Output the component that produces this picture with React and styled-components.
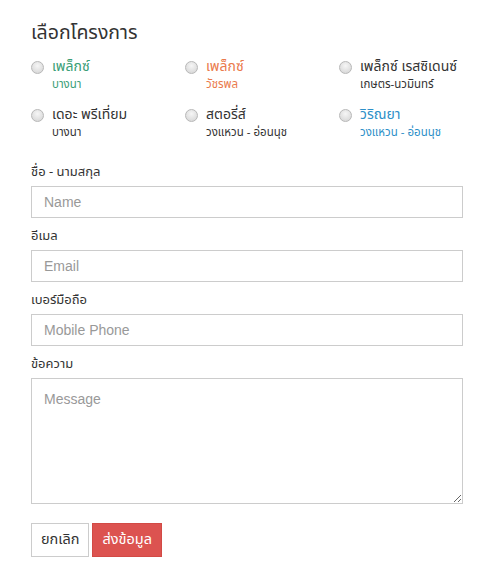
import styled, { createGlobalStyle } from "styled-components";

const projects = [
  { name: "เพล็กซ์", area: "บางนา", color: "#3a9e76" },
  { name: "เพล็กซ์", area: "วัชรพล", color: "#ea7a4c" },
  { name: "เพล็กซ์ เรสซิเดนซ์", area: "เกษตร-นวมินทร์", color: "#333" },
  { name: "เดอะ พรีเที่ยม", area: "บางนา", color: "#333" },
  { name: "สตอรี่ส์", area: "วงแหวน - อ่อนนุช", color: "#333" },
  { name: "วิริณยา", area: "วงแหวน - อ่อนนุช", color: "#2d8fc8" },
];

const fields = [
  { label: "ชื่อ - นามสกุล", placeholder: "Name", type: "text" },
  { label: "อีเมล", placeholder: "Email", type: "email" },
  { label: "เบอร์มือถือ", placeholder: "Mobile Phone", type: "tel" },
];

export default function App() {
  return (
    <>
      <GlobalStyle />
      <Form onSubmit={(e) => e.preventDefault()}>
        <Title>เลือกโครงการ</Title>
        <ProjectGrid>
          {projects.map((p, i) => (
            <ProjectOption key={i}>
              <Radio type="radio" name="project" />
              <ProjectText>
                <ProjectName $color={p.color}>{p.name}</ProjectName>
                <ProjectArea $color={p.color}>{p.area}</ProjectArea>
              </ProjectText>
            </ProjectOption>
          ))}
        </ProjectGrid>
        <Fields>
          {fields.map((f) => (
            <Field key={f.label}>
              <Label>{f.label}</Label>
              <Input type={f.type} placeholder={f.placeholder} />
            </Field>
          ))}
          <Field>
            <Label>ข้อความ</Label>
            <TextArea placeholder="Message" />
          </Field>
        </Fields>
        <Actions>
          <Button type="button">ยกเลิก</Button>
          <Button type="submit" $primary>
            ส่งข้อมูล
          </Button>
        </Actions>
      </Form>
    </>
  );
}

const GlobalStyle = createGlobalStyle`
  body {
    margin: 0;
    background: #fff;
    font-family: "Noto Sans Thai", "Noto Sans", "Liberation Sans", sans-serif;
    color: #333;
  }
`;

const Form = styled.form`
  width: 432px;
  padding: 19px 29px 0 31px;
  display: flex;
  flex-direction: column;
`;

const Title = styled.h2`
  margin: 0;
  font-size: 19.5px;
  font-weight: 400;
  line-height: 28px;
  color: #333;
`;

const ProjectGrid = styled.div`
  display: grid;
  grid-template-columns: repeat(3, 154px);
  row-gap: 12px;
  margin-top: 10px;
`;

const ProjectOption = styled.label`
  display: flex;
  align-items: flex-start;
  gap: 8px;
  cursor: pointer;
`;

const Radio = styled.input`
  appearance: none;
  width: 13px;
  height: 13px;
  margin: 4px 0 0 0;
  border-radius: 50%;
  border: 1px solid #b8b8b8;
  background: radial-gradient(circle at 50% 35%, #f6f6f6, #d2d2d2);
  flex-shrink: 0;
`;

const ProjectText = styled.div`
  display: flex;
  flex-direction: column;
`;

const ProjectName = styled.span`
  font-size: 14px;
  line-height: 19px;
  color: ${(p) => p.$color};
`;

const ProjectArea = styled.span`
  font-size: 11.5px;
  line-height: 17px;
  color: ${(p) => p.$color};
`;

const Fields = styled.div`
  display: flex;
  flex-direction: column;
  gap: 9px;
  margin-top: 22px;
`;

const Field = styled.div`
  display: flex;
  flex-direction: column;
  gap: 5px;
`;

const Label = styled.label`
  font-size: 13px;
  line-height: 18px;
  color: #333;
`;

const Input = styled.input`
  box-sizing: border-box;
  width: 100%;
  height: 32px;
  padding: 0 12px;
  border: 1px solid #ccc;
  font-family: "Liberation Sans", Arial, sans-serif;
  font-size: 14px;
  color: #333;
  outline: none;
  &::placeholder {
    color: #999;
  }
`;

const TextArea = styled.textarea`
  box-sizing: border-box;
  width: 100%;
  height: 126px;
  padding: 12px;
  border: 1px solid #ccc;
  font-family: "Liberation Sans", Arial, sans-serif;
  font-size: 14px;
  color: #333;
  outline: none;
  &::placeholder {
    color: #999;
  }
`;

const Actions = styled.div`
  display: flex;
  gap: 3px;
  margin-top: 19px;
`;

const Button = styled.button`
  box-sizing: border-box;
  height: 34px;
  padding: 0 9px;
  font-family: "Noto Sans Thai", "Noto Sans", "Liberation Sans", sans-serif;
  font-size: 14.5px;
  cursor: pointer;
  border: 1px solid ${(p) => (p.$primary ? "#d24a45" : "#ccc")};
  background: ${(p) => (p.$primary ? "#dc5350" : "#fff")};
  color: ${(p) => (p.$primary ? "#fff" : "#333")};
`;
